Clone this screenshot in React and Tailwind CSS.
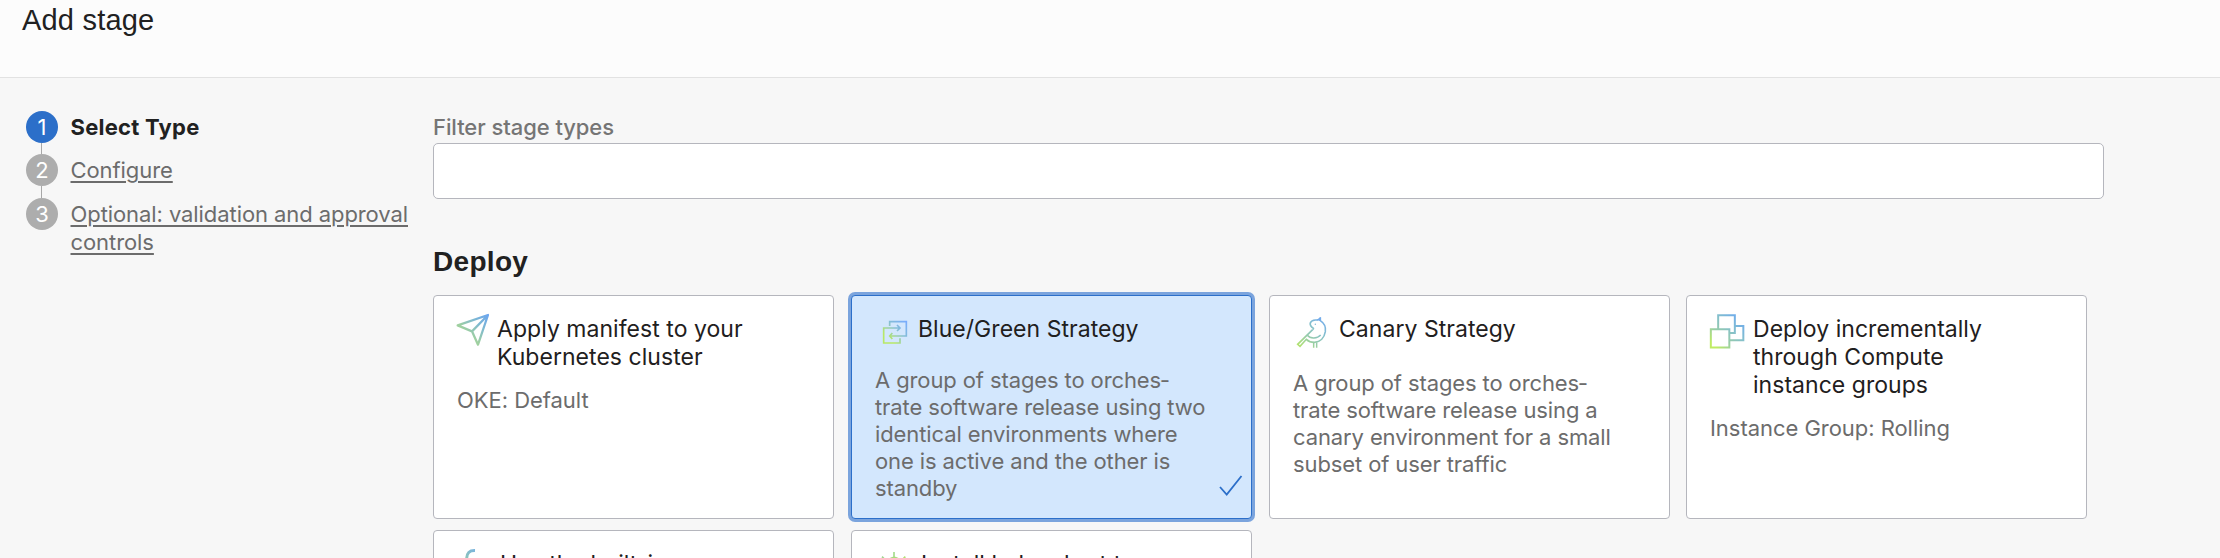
const steps = [
  { n: 1, label: 'Select Type', active: true },
  { n: 2, label: 'Configure' },
  { n: 3, label: 'Optional: validation and approval controls' },
];

function Icon({ id, viewBox, box, stops, className, children }) {
  const [x1, y1, x2, y2] = box;
  return (
    <svg viewBox={viewBox} className={`h-10 shrink-0 overflow-visible ${className}`} fill="none" stroke={`url(#${id})`} preserveAspectRatio="xMinYMin meet">
      <defs>
        <linearGradient id={id} gradientUnits="userSpaceOnUse" x1={x1} y1={y1} x2={x2} y2={y2}>
          {stops.map((s, i) => (
            <stop key={s} offset={i / (stops.length - 1)} stopColor={s} />
          ))}
        </linearGradient>
      </defs>
      {children}
    </svg>
  );
}

const PlaneIcon = () => (
  <Icon id="plane" viewBox="81 90 120 120" box={[176, 90, 120, 150]} stops={['#6ba5f0', '#7fb9d0', '#9fd0a0']} className="w-10">
    <path d="M83 121 174 90 144 179 126 139ZM174 90 126 139" strokeWidth="6.8" strokeLinejoin="round" />
  </Icon>
);

const BlueGreenIcon = () => (
  <Icon id="bluegreen" viewBox="105 90 120 120" box={[198, 108, 148, 160]} stops={['#78abff', '#84bdd6', '#b8e866']} className="w-[43px]">
    <path d="M149 123V110H199V153H150M157 144 149 153 157 162M180 160V174H131V129H179M171 120 180 129 171 138" strokeWidth="5" />
  </Icon>
);

const CanaryIcon = () => (
  <Icon id="canary" viewBox="99 90 120 120" box={[190, 100, 118, 186]} stops={['#74acec', '#84bfcd', '#98cda6', '#b2e36a']} className="w-[46px]">
    <path d="M181 97V107C192 114 198 126 196 140C193 158 181 171 163 172C152 172 144 168 139 163L120 184L113 178L158 134" strokeWidth="4.800" />
    <path d="M158 134C163 130 160 129 156 127C146 118 150 106 166 105H174" strokeWidth="4.800" />
    <path d="M169 105 182 96V109Z" fill="#74acec" stroke="none" />
    <circle cx="166" cy="118" r="2.2" fill="#82b9d8" stroke="none" />
    <path d="M142 151C151 162 172 161 182 150M161 172V188M170 172V188" strokeWidth="4.400" />
  </Icon>
);

const ComputeIcon = () => (
  <Icon id="compute" viewBox="120 90 120 120" box={[210, 104, 134, 184]} stops={['#70adea', '#84bfcd', '#98cda6', '#bfec62']} className="w-[43px]">
    <path d="M144.500 131V90.500H194.500V144H181M195 123H220V166H180M122.500 132.500H178V187.500H122.500Z" strokeWidth="6" />
  </Icon>
);

const BuiltInIcon = () => (
  <Icon id="builtin" viewBox="81 795 120 120" box={[140, 795, 100, 840]} stops={['#78b3e0', '#98cda6']} className="w-[43px]">
    <path d="M135 796.500C118 796 110 804 110 822V850" strokeWidth="9" />
  </Icon>
);

const HelmIcon = () => (
  <Icon id="helm" viewBox="105 795 120 120" box={[190, 800, 120, 860]} stops={['#b2e36a', '#98cda6']} className="w-[46px]">
    <path d="M162 801V830" strokeWidth="5" stroke="#a4dc8c" />
    <path d="M151 821C158 816 167 816 174 821M126 815 136 825M196 815 186 825" strokeWidth="5" />
  </Icon>
);

const cards = [
  { icon: PlaneIcon, title: 'Apply manifest to your Kubernetes cluster', text: 'OKE: Default', gap: 'mt-4 tracking-[-0.04px]' },
  { icon: BlueGreenIcon, title: 'Blue/Green Strategy', text: 'A group of stages to orches\u00adtrate software release using two identical environments where one is active and the other is standby', gap: 'mt-6 tracking-[-0.11px]', selected: true },
  { icon: CanaryIcon, title: 'Canary Strategy', text: 'A group of stages to orches\u00adtrate software release using a canary environment for a small subset of user traffic', gap: 'mt-[27px] tracking-[-0.11px]' },
  { icon: ComputeIcon, title: 'Deploy incrementally through Compute instance groups', text: 'Instance Group: Rolling', gap: 'mt-4 tracking-[-0.04px]' },
  { icon: BuiltInIcon, title: 'Use the built-in', text: '', gap: 'mt-4' },
  { icon: HelmIcon, title: 'Install helm chart to', text: '', gap: 'mt-4' },
];

function Card({ icon: CardIcon, title, text, gap, selected }) {
  return (
    <div
      className={`relative h-56 w-[401px] rounded-[4px] border pt-[19px] pr-10 pl-[23px] ${
        selected ? 'border-[#2c6fc9] bg-[#d3e7fd] ring-3 ring-[#7ba4dd]' : 'border-[#b5b6bd] bg-white'
      }`}
    >
      <div className="flex min-h-7 items-start">
        <div className="flex h-7">
          <CardIcon />
        </div>
        <h3 className="max-w-[256px] grow text-[23px] leading-7 tracking-[0.04px] text-[#1f2020]">{title}</h3>
      </div>
      <p className={`w-[332px] text-[22px] leading-[27px] text-[#6c6c6c] ${gap}`}>{text}</p>
      {selected && (
        <svg viewBox="0 0 24 22" className="absolute right-[8px] bottom-[21px] h-[22px] w-6" fill="none" stroke="#2c6fc9" strokeWidth="1.8">
          <path d="M1 12 7.700 19.500 22.500 1" />
        </svg>
      )}
    </div>
  );
}

export default function App() {
  return (
    <div className="flex h-[558px] flex-col overflow-hidden bg-[#f7f7f7] font-['Inter',sans-serif]">
      <header className="h-[78px] shrink-0 border-b border-[#e2e2e2] bg-[#fcfcfc] pt-1 pl-[22px]">
        <h1 className="font-['Liberation_Sans',sans-serif] text-[29px] leading-8 tracking-[0.2px] text-[#212121]">Add stage</h1>
      </header>
      <div className="flex grow">
        <nav className="w-[433px] shrink-0 pt-[33px] pl-[26px]">
          {steps.map(({ n, label, active }) => (
            <div key={n} className={`flex ${n === 1 ? 'h-[43px]' : 'h-11'}`}>
              <div className="flex w-8 flex-col items-center">
                <span className={`flex size-8 shrink-0 items-center justify-center rounded-full text-[22px] leading-8 text-white ${active ? 'bg-[#2c6fc9]' : 'bg-[#adadad]'}`}>{n}</span>
                {n < 3 && <span className="mr-px w-px grow bg-[#a8a8a8]" />}
              </div>
              <span className={`ml-[12.5px] w-[345px] pt-0.5 text-[22px] leading-7 ${active ? 'font-bold tracking-[0.25px] text-[#212121]' : 'tracking-[-0.08px] text-[#6c6c6c] underline decoration-[1.5px] underline-offset-[3px]'}`}>
                {label}
              </span>
            </div>
          ))}
        </nav>
        <main className="w-[1671px] pt-[35px]">
          <label htmlFor="filter" className="block text-[22px] leading-7 font-medium tracking-[-0.07px] text-[#757575]">Filter stage types</label>
          <input id="filter" className="mt-0.5 block h-14 w-full rounded-[5px] border border-[#b5b6bd] bg-white px-4 text-[22px]" />
          <h2 className="mt-[47px] font-['Liberation_Sans',sans-serif] text-[28px] leading-8 font-bold tracking-[0.3px] text-[#212121]">Deploy</h2>
          <div className="mt-[17px] grid grid-cols-[418px_418px_417px_401px] gap-y-[11px]">
            {cards.map((card) => (
              <Card key={card.title} {...card} />
            ))}
          </div>
        </main>
      </div>
    </div>
  );
}
